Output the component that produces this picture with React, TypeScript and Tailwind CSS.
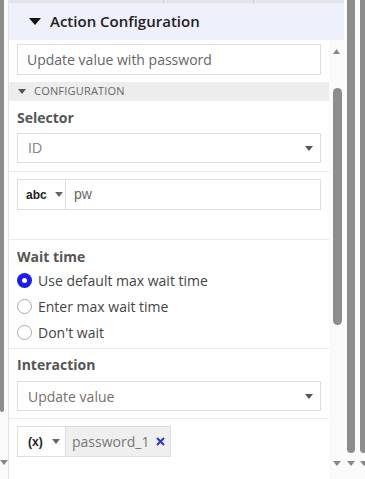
import React from 'react';

const font = { fontFamily: "'Open Sans', 'Noto Sans', sans-serif" };
const arial = { fontFamily: "'Liberation Sans', Arial, sans-serif" };

function Caret({ className = '' }: { className?: string }) {
  return (
    <svg width="8" height="5" viewBox="0 0 8 5" className={className}>
      <path d="M0 0h8L4 5z" fill="currentColor" />
    </svg>
  );
}

function Select({ value, arialText = false, tone = 'text-[#777]' }: { value: string; arialText?: boolean; tone?: string }) {
  return (
    <div className="flex h-[30px] items-center justify-between border border-[#dedede] bg-white pl-[10px] pr-[7px]">
      <span className={`text-[14px] ${tone}`} style={arialText ? arial : font}>{value}</span>
      <Caret className="text-[#555]" />
    </div>
  );
}

function Radio({ checked, label }: { checked?: boolean; label: string }) {
  return (
    <div className="flex h-[26px] items-center gap-[6px]">
      {checked ? (
        <span className="flex h-[15px] w-[15px] items-center justify-center rounded-full bg-[#1c1cf0]">
          <span className="h-[5px] w-[5px] rounded-full bg-white" />
        </span>
      ) : (
        <span className="h-[15px] w-[15px] rounded-full border border-[#aaa] bg-white" />
      )}
      <span className="text-[14px] text-[#444]">{label}</span>
    </div>
  );
}

export default function App() {
  return (
    <div className="flex h-[479px] w-[365px] overflow-hidden bg-white" style={font}>
      {/* left outer scrollbar */}
      <div className="flex w-[8px] flex-col bg-[#fafafa]">
        <div className="h-[412px] w-[4px] rounded-b-[3px] bg-[#8c8c8c]" />
        <div className="mt-[48px] text-[#888]">
          <Caret />
        </div>
      </div>

      {/* panel */}
      <div className="flex w-[336px] flex-col border-l border-[#e2e2e2]">
        <div className="relative h-[3px] bg-[#e4e4ea]">
          <div className="absolute left-[154px] top-0 h-[3px] w-px bg-[#cfcfd6]" />
          <div className="absolute left-[244px] top-0 h-[3px] w-px bg-[#cfcfd6]" />
        </div>
        <div className="flex h-[37px] items-center bg-[#eef0fc] pl-[20px]">
          <svg width="12" height="7" viewBox="0 0 12 7" className="text-[#111]">
            <path d="M0 0h12L6 7z" fill="currentColor" />
          </svg>
          <span className="ml-[9px] text-[15px] font-semibold text-[#222]">Action Configuration</span>
        </div>

        <div className="flex flex-1">
          {/* content */}
          <div className="flex w-[321px] flex-col">
            <div className="px-[8px] pt-[4px]">
              <div className="flex h-[31px] items-center border border-[#dedede] pl-[9px] text-[14px] text-[#666]">
                Update value with password
              </div>
            </div>
            <div className="mt-[7px] flex h-[19px] items-center bg-[#ededed] pl-[9px]">
              <Caret className="text-[#555]" />
              <span className="ml-[8px] text-[11px] tracking-[0.2px] text-[#666]">CONFIGURATION</span>
            </div>

            <div className="border-b border-[#ececec] px-[8px] pt-[7px] pb-[8px]">
              <div className="h-[20px] text-[14px] font-bold leading-[20px] text-[#555]">Selector</div>
              <div className="mt-[5px]">
                <Select value="ID" arialText tone="text-[#888]" />
              </div>
            </div>

            <div className="border-b border-[#ececec] px-[8px] pt-[7px] pb-[29px]">
              <div className="flex h-[31px] border border-[#dedede]">
                <div className="flex w-[48px] items-center border-r border-[#dedede] pl-[8px]">
                  <span className="text-[12px] font-bold text-[#222]" style={arial}>abc</span>
                  <Caret className="ml-[8px] text-[#666]" />
                </div>
                <div className="flex items-center pl-[8px] text-[14px] text-[#666]" style={arial}>pw</div>
              </div>
            </div>

            <div className="border-b border-[#ececec] px-[8px] pt-[7px] pb-[3px]">
              <div className="h-[20px] text-[14px] font-bold leading-[20px] text-[#555]">Wait time</div>
              <Radio checked label="Use default max wait time" />
              <Radio label="Enter max wait time" />
              <Radio label="Don't wait" />
            </div>

            <div className="border-b border-[#ececec] px-[8px] pt-[6px] pb-[7px]">
              <div className="h-[20px] text-[14px] font-bold leading-[20px] text-[#555]">Interaction</div>
              <div className="mt-[6px]">
                <Select value="Update value" tone="text-[#7a7068]" />
              </div>
            </div>

            <div className="px-[8px] pt-[7px]">
              <div className="flex h-[31px] w-[154px] border border-[#dedede]">
                <div className="flex w-[48px] items-center border-r border-[#dedede] pl-[10px]">
                  <span className="text-[12px] font-bold text-[#222]" style={arial}>(x)</span>
                  <Caret className="ml-[9px] text-[#666]" />
                </div>
                <div className="flex flex-1 items-center bg-[#efefef] pl-[6px]">
                  <span className="text-[14px] text-[#777]">password_1</span>
                  <svg width="9" height="9" viewBox="0 0 9 9" className="ml-[7px] text-[#2a35d6]">
                    <path d="M1 1l7 7M8 1L1 8" stroke="currentColor" strokeWidth="2" />
                  </svg>
                </div>
              </div>
            </div>
          </div>

          {/* inner scrollbar */}
          <div className="flex w-[15px] flex-col items-center bg-[#fafafa] pt-[9px]">
            <svg width="7" height="5" viewBox="0 0 7 5" className="text-[#888]">
              <path d="M0 5h7L3.5 0z" fill="currentColor" />
            </svg>
            <div className="mt-[34px] ml-[2px] h-[237px] w-[9px] rounded-[5px] bg-[#8c8c8c]" />
            <div className="mt-[136px] text-[#888]">
              <Caret />
            </div>
          </div>
        </div>
      </div>

      {/* right outer scrollbars */}
      <div className="flex flex-1 gap-[5px] bg-[#fafafa] pl-[3px]">
        <div className="flex w-[8px] flex-col items-center">
          <div className="h-[453px] w-[8px] rounded-b-[4px] bg-[#8c8c8c]" />
          <div className="mt-[8px] text-[#888]"><Caret /></div>
        </div>
        <div className="flex w-[8px] flex-col items-center">
          <div className="h-[453px] w-[8px] rounded-b-[4px] bg-[#8c8c8c]" />
          <div className="mt-[8px] text-[#888]"><Caret /></div>
        </div>
      </div>
    </div>
  );
}
